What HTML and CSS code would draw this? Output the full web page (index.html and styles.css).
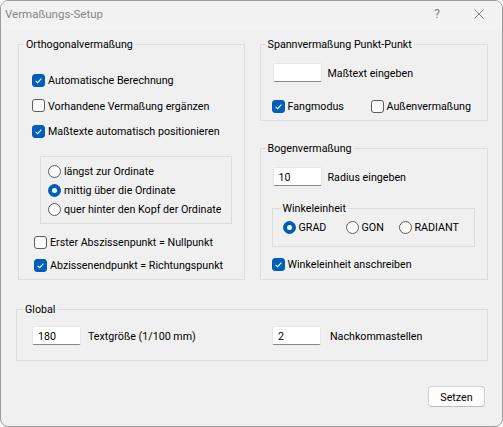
FILE: index.html
```html
<!DOCTYPE html>
<html lang="de">
<head>
<meta charset="utf-8">
<title>Vermaßungs-Setup</title>
<link rel="stylesheet" href="styles.css">
</head>
<body>
<div class="window">
  <div class="titlebar">
    <span class="title">Vermaßungs-Setup</span>
    <span class="help">?</span>
    <svg class="close" width="10" height="10" viewBox="0 0 10 10"><path d="M0.5 0.5 L9.5 9.5 M9.5 0.5 L0.5 9.5" stroke="#8a8a8a" stroke-width="1" fill="none"/></svg>
  </div>
  <div class="content">
    <div class="columns">
      <div class="group ortho">
        <div class="caption">Orthogonalvermaßung</div>
        <div class="stack top">
          <div class="cb on"><span class="box"><svg viewBox="0 0 13 13" width="13" height="13"><path d="M3.6 6.9 L5.6 8.7 L9.4 4.6" stroke="#fff" stroke-width="1.1" fill="none"/></svg></span><span class="t">Automatische Berechnung</span></div>
          <div class="cb"><span class="box"></span><span class="t">Vorhandene Vermaßung ergänzen</span></div>
          <div class="cb on"><span class="box"><svg viewBox="0 0 13 13" width="13" height="13"><path d="M3.6 6.9 L5.6 8.7 L9.4 4.6" stroke="#fff" stroke-width="1.1" fill="none"/></svg></span><span class="t">Maßtexte automatisch positionieren</span></div>
        </div>
        <div class="radiobox">
          <div class="rb"><span class="dot"></span><span class="t">längst zur Ordinate</span></div>
          <div class="rb on"><span class="dot"></span><span class="t">mittig über die Ordinate</span></div>
          <div class="rb"><span class="dot"></span><span class="t clip">quer hinter den Kopf der Ordinate</span></div>
        </div>
        <div class="stack lower">
          <div class="cb"><span class="box"></span><span class="t">Erster Abszissenpunkt = Nullpunkt</span></div>
          <div class="cb on"><span class="box"><svg viewBox="0 0 13 13" width="13" height="13"><path d="M3.6 6.9 L5.6 8.7 L9.4 4.6" stroke="#fff" stroke-width="1.1" fill="none"/></svg></span><span class="t">Abzissenendpunkt = Richtungspunkt</span></div>
        </div>
      </div>
      <div class="rightcol">
        <div class="group span">
          <div class="caption">Spannvermaßung Punkt-Punkt</div>
          <div class="field"><span class="edit"></span><span class="t">Maßtext eingeben</span></div>
          <div class="pair">
            <div class="cb on"><span class="box"><svg viewBox="0 0 13 13" width="13" height="13"><path d="M3.6 6.9 L5.6 8.7 L9.4 4.6" stroke="#fff" stroke-width="1.1" fill="none"/></svg></span><span class="t">Fangmodus</span></div>
            <div class="cb"><span class="box"></span><span class="t">Außenvermaßung</span></div>
          </div>
        </div>
        <div class="group bogen">
          <div class="caption">Bogenvermaßung</div>
          <div class="field"><span class="edit">10</span><span class="t">Radius eingeben</span></div>
          <div class="group winkel">
            <div class="caption">Winkeleinheit</div>
            <div class="units">
              <div class="rb on"><span class="dot"></span><span class="t">GRAD</span></div>
              <div class="rb"><span class="dot"></span><span class="t">GON</span></div>
              <div class="rb"><span class="dot"></span><span class="t">RADIANT</span></div>
            </div>
          </div>
          <div class="cb on shift"><span class="box"><svg viewBox="0 0 13 13" width="13" height="13"><path d="M3.6 6.9 L5.6 8.7 L9.4 4.6" stroke="#fff" stroke-width="1.1" fill="none"/></svg></span><span class="t">Winkeleinheit anschreiben</span></div>
        </div>
      </div>
    </div>
    <div class="group global">
      <div class="caption">Global</div>
      <div class="globalrow">
        <div class="field"><span class="edit">180</span><span class="t">Textgröße (1/100 mm)</span></div>
        <div class="field wide"><span class="edit">2</span><span class="t">Nachkommastellen</span></div>
      </div>
    </div>
    <div class="actions"><button class="btn">Setzen</button></div>
  </div>
</div>
</body>
</html>
```
FILE: styles.css
```css
* { box-sizing: border-box; }
html, body { margin: 0; padding: 0; background: #ffffff; }
body {
  font-family: "Roboto", "Liberation Sans", sans-serif;
  font-size: 10.7px;
  line-height: 16px;
  color: #000;
}
.window {
  width: 503px;
  height: 427px;
  border: 1px solid #9c9c9c;
  border-radius: 8px;
  background: #f0f0f0;
  overflow: hidden;
}
.titlebar {
  height: 29px;
  display: flex;
  align-items: center;
  padding: 0 0 3px 4px;
  background: #f2f2f2;
  color: #858585;
}
.title { flex: 1; font-size: 11.5px; }
.help { width: 10px; text-align: center; font-size: 12px; margin-right: 4px; }
.close { margin-left: 28px; margin-right: 18px; flex: none; }

.content { padding: 14px 14px 0 16px; }
.columns { display: flex; gap: 15px; align-items: flex-start; margin-left: 1px; }

.group { border: 1px solid #dcdcdc; }
.caption {
  width: fit-content;
  margin: -9px 0 0 5px;
  padding: 1px 2px 0;
  height: 16px;
  background: #f0f0f0;
  line-height: 16px;
  white-space: nowrap;
}
.t { padding-top: 2px; line-height: 16px; }

.ortho { width: 227px; height: 236px; padding: 0 6px 0 13px; }
.ortho > .caption { margin-left: -8px; margin-bottom: 20px; }
.stack { display: flex; flex-direction: column; }
.stack.top { gap: 9.5px; }
.stack.lower { margin: 10px 0 0 2px; gap: 7px; }

.rightcol { width: 229px; display: flex; flex-direction: column; }
.span { height: 77px; padding: 0 6px 0 12px; }
.span > .caption { margin-left: -7px; margin-bottom: 11px; }
.bogen { margin-top: 27px; height: 132px; padding: 0 6px 0 12px; }
.bogen > .caption { margin-left: -7px; margin-bottom: 11px; }

.cb { display: flex; align-items: center; height: 16px; white-space: nowrap; }
.cb .box {
  width: 13px; height: 13px; flex: none;
  border: 1px solid #5d5d5d; border-radius: 3px;
  background: #fbfbfb; margin-right: 3px;
  display: flex; align-items: center; justify-content: center;
}
.cb.on .box { background: #005fb8; border-color: #005fb8; }
.cb .box svg { display: block; flex: none; }

.rb { display: flex; align-items: center; height: 16px; white-space: nowrap; }
.rb .dot {
  width: 13px; height: 13px; flex: none;
  border: 1px solid #5d5d5d; border-radius: 50%;
  background: #fbfbfb; margin-right: 3px;
  display: flex; align-items: center; justify-content: center;
}
.rb.on .dot { background: #005fb8; border-color: #005fb8; }
.rb.on .dot::after {
  content: ""; width: 5px; height: 5px; border-radius: 50%; background: #fff;
}
.radiobox {
  margin: 17px 0 0 8px;
  width: 192px;
  border: 1px solid #dcdcdc;
  padding: 6px 0 6px 7px;
  display: flex; flex-direction: column; gap: 3px;
}
.clip { display: block; width: 157px; overflow: hidden; }

.field { display: flex; align-items: center; gap: 6px; white-space: nowrap; }
.edit {
  width: 49px; height: 19px; flex: none;
  background: #ffffff;
  border: 1px solid #e6e6e6;
  border-bottom-color: #878787;
  border-radius: 2px;
  padding: 1px 5px 0;
  line-height: 17px;
}
.pair { display: grid; grid-template-columns: 99px auto; margin: 16px 0 0 -1px; }

.winkel { margin: 22px 0 0 -1px; width: 203px; height: 39px; padding: 0 6px 0 10px; }
.winkel > .caption { margin-left: -2px; margin-bottom: 3px; }
.units { display: grid; grid-template-columns: 63px 53px auto; }
.shift { margin: 9px 0 0 -1px; }

.global { margin: 29px 0 0 -1px; width: 472px; height: 52px; padding: 0 6px 0 15px; }
.global > .caption { margin-left: -9px; margin-bottom: 9px; }
.globalrow { display: grid; grid-template-columns: 240px auto; }
.globalrow .field { gap: 7px; }
.globalrow .field.wide { gap: 9px; }

.actions { display: flex; justify-content: flex-end; margin-top: 25px; padding-right: 3px; }
.btn {
  width: 57px; height: 21px;
  font-family: inherit; font-size: 10.7px; color: #000;
  background: #fdfdfd;
  border: 1px solid #d0d0d0;
  border-bottom-color: #bdbdbd;
  border-radius: 4px;
  padding: 1px 0 0;
}
```
